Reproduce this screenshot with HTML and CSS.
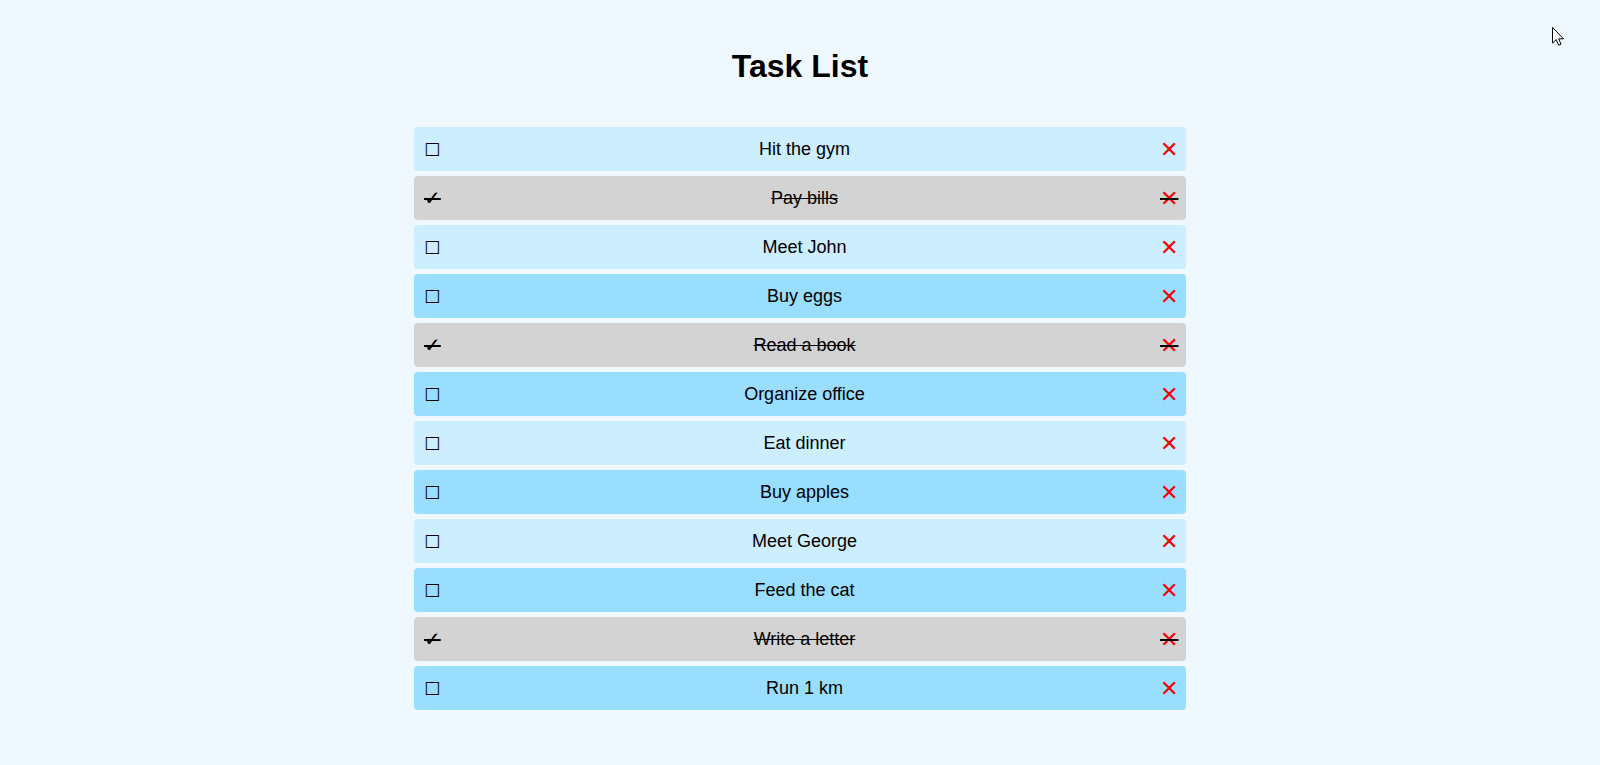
FILE: index.html
```html
<!DOCTYPE html>
<html lang="en">
<head>
<meta charset="utf-8">
<title>Task List</title>
<link rel="stylesheet" href="styles.css">
</head>
<body>
<div class="app">
  <h1 class="title">Task List</h1>
  <ul class="tasks">
    <li class="task"><span class="check">☐</span><span class="text">Hit the gym</span><span class="del">✕</span></li>
    <li class="task done"><span class="check tick">✓</span><span class="text">Pay bills</span><span class="del">✕</span></li>
    <li class="task"><span class="check">☐</span><span class="text">Meet John</span><span class="del">✕</span></li>
    <li class="task"><span class="check">☐</span><span class="text">Buy eggs</span><span class="del">✕</span></li>
    <li class="task done"><span class="check tick">✓</span><span class="text">Read a book</span><span class="del">✕</span></li>
    <li class="task"><span class="check">☐</span><span class="text">Organize office</span><span class="del">✕</span></li>
    <li class="task"><span class="check">☐</span><span class="text">Eat dinner</span><span class="del">✕</span></li>
    <li class="task"><span class="check">☐</span><span class="text">Buy apples</span><span class="del">✕</span></li>
    <li class="task"><span class="check">☐</span><span class="text">Meet George</span><span class="del">✕</span></li>
    <li class="task"><span class="check">☐</span><span class="text">Feed the cat</span><span class="del">✕</span></li>
    <li class="task done"><span class="check tick">✓</span><span class="text">Write a letter</span><span class="del">✕</span></li>
    <li class="task"><span class="check">☐</span><span class="text">Run 1 km</span><span class="del">✕</span></li>
  </ul>
</div>
<svg class="cursor" width="14" height="20" viewBox="0 0 14 20"><path d="M0.5 0.5 L0.5 16 L4.2 12.6 L6.6 18.2 L9 17.2 L6.7 11.8 L11.5 11.8 Z" fill="#fff" stroke="#000" stroke-width="1"/></svg>
</body>
</html>
```
FILE: styles.css
```css
html, body {
  margin: 0;
  padding: 0;
}
body {
  background: #f0f8ff;
  font-family: "Liberation Sans", Arial, sans-serif;
  color: #000;
  min-height: 765px;
}
.app {
  width: 772px;
  margin: 0 auto;
  padding-top: 48px;
}
.title {
  margin: 0 0 42px;
  font-size: 32px;
  font-weight: bold;
  text-align: center;
  line-height: 37px;
}
.tasks {
  list-style: none;
  margin: 0;
  padding: 0;
  display: flex;
  flex-direction: column;
  gap: 5px;
}
.task {
  display: flex;
  align-items: center;
  height: 44px;
  padding: 0 11px 0 10px;
  box-sizing: border-box;
  border-radius: 4px;
  background: #cceeff;
  font-size: 18px;
}
.task:nth-child(even) {
  background: #99ddff;
}
.task.done {
  background: #d3d3d3;
  text-decoration: line-through;
}
.check {
  font-family: "DejaVu Sans", sans-serif;
  font-size: 18px;
  width: 15px;
  margin-right: 10px;
}
.tick {
  font-size: 20px;
}
.text {
  flex: 1;
  text-align: center;
}
.del {
  font-family: "DejaVu Sans", sans-serif;
  color: #ff0000;
  font-size: 22px;
  width: 15px;
}
.cursor {
  position: fixed;
  left: 1552px;
  top: 27px;
}
```
